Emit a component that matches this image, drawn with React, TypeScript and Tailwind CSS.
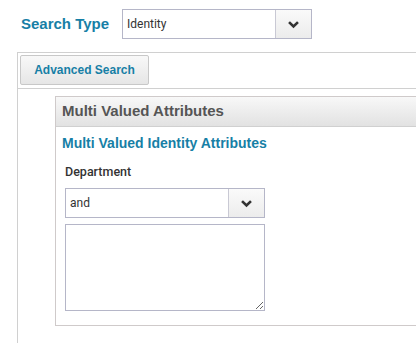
function Chevron() {
  return (
    <svg viewBox="0 0 16 16" className="w-[13px] h-[13px]">
      <path d="M2.5 5 L8 10.5 L13.5 5" fill="none" stroke="#333" strokeWidth="3.2" strokeLinecap="butt" strokeLinejoin="miter" />
    </svg>
  );
}

function SelectBox({ value, width }: { value: string; width: string }) {
  return (
    <div className={`flex h-[30px] border border-[#b5b6c8] bg-white ${width}`}>
      <div className="flex-1 flex items-center pl-[4px] text-[12px] text-[#333] font-['Roboto','Liberation_Sans',sans-serif]">
        {value}
      </div>
      <div className="w-[36px] flex items-center justify-center border-l border-[#c9c9d4] bg-gradient-to-b from-[#fafafa] to-[#ececec]">
        <Chevron />
      </div>
    </div>
  );
}

export default function App() {
  return (
    <div className="w-[416px] h-[343px] overflow-hidden bg-white font-['Liberation_Sans',Arial,sans-serif]">
      {/* Search type row */}
      <div className="flex items-center pt-[9px] pl-[21px] h-[39px]">
        <span className="text-[15px] font-bold text-[#177fa6] w-[101px]">Search Type</span>
        <SelectBox value="Identity" width="w-[190px]" />
      </div>

      {/* Outer panel */}
      <div className="mt-[13px] ml-[17px] w-[430px] h-[300px] border-l border-t border-[#d0d0d0]">
        <div className="h-[36px] border-b border-[#d0d0d0] pl-[2px] pt-[2px]">
          <button className="w-[129px] h-[30px] border border-[#c8c8c8] rounded-[2px] bg-gradient-to-b from-[#f8f8f8] to-[#e6e6e6] text-[12px] font-bold text-[#177fa6]">
            Advanced Search
          </button>
        </div>

        {/* Inner panel */}
        <div className="mt-[7px] ml-[37px] w-[400px] border border-[#cfcaca]">
          <div className="h-[30px] flex items-center pl-[6px] bg-gradient-to-b from-[#f8f8f8] to-[#e2e2e2] border-b border-[#d0d0d0]">
            <span className="text-[15px] font-bold text-[#555]">Multi Valued Attributes</span>
          </div>
          <div className="pl-[6px] pt-[8px] pb-[14px]">
            <div className="text-[14px] font-bold text-[#177fa6] leading-[16px]">Multi Valued Identity Attributes</div>
            <div className="mt-[14px] pl-[3px] text-[12.5px] text-[#333] font-medium font-['Roboto','Liberation_Sans',sans-serif] leading-[14px]">
              Department
            </div>
            <div className="mt-[9px] pl-[3px]">
              <SelectBox value="and" width="w-[200px]" />
              <textarea className="mt-[6px] block w-[200px] h-[87px] border border-[#b5b6c8] outline-none resize-y" />
            </div>
          </div>
        </div>
      </div>
    </div>
  );
}
